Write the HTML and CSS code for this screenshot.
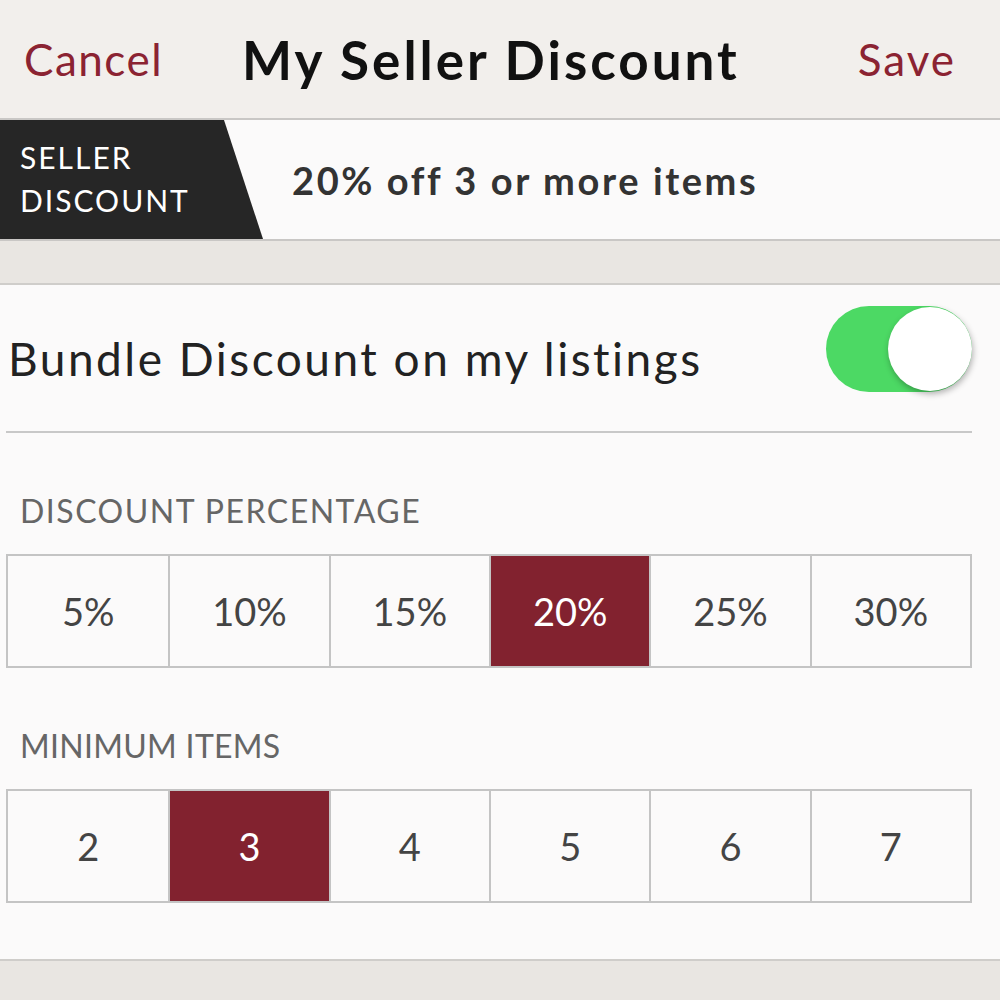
FILE: index.html
```html
<!DOCTYPE html>
<html>
<head>
  <title>My Seller Discount</title>
  <link rel="stylesheet" href="styles.css">
</head>
<body>

  <div class="navbar">
    <span class="nav-link">Cancel</span>
    <h1 class="nav-title">My Seller Discount</h1>
    <span class="nav-link save">Save</span>
  </div>

  <div class="banner">
    <div class="tag">SELLER<br>DISCOUNT</div>
    <div class="banner-text">20% off 3 or more items</div>
  </div>

  <div class="band"></div>

  <div class="card">
    <div class="toggle-row">
      <span class="toggle-label">Bundle Discount on my listings</span>
      <div class="switch on"><div class="knob"></div></div>
    </div>

    <div class="section-label">DISCOUNT PERCENTAGE</div>
    <div class="options">
      <div class="opt">5%</div>
      <div class="opt">10%</div>
      <div class="opt">15%</div>
      <div class="opt selected">20%</div>
      <div class="opt">25%</div>
      <div class="opt">30%</div>
    </div>

    <div class="section-label">MINIMUM ITEMS</div>
    <div class="options">
      <div class="opt">2</div>
      <div class="opt selected">3</div>
      <div class="opt">4</div>
      <div class="opt">5</div>
      <div class="opt">6</div>
      <div class="opt">7</div>
    </div>
  </div>

  <div class="band bottom"></div>

</body>
</html>
```

FILE: styles.css
```css
body {
  margin: 0;
  background: #e9e6e2;
  font-family: Lato, "Open Sans", sans-serif;
  color: #222;
}
.navbar {
  height: 118px;
  background: #f2efec;
  border-bottom: 2px solid #c9c7c5;
  display: flex;
  align-items: center;
  padding: 0 44px 0 24px;
}
.nav-link {
  color: #8b2332;
  font-size: 44px;
  letter-spacing: 1.5px;
}
.nav-link.save {
  margin-left: auto;
  letter-spacing: 2px;
}
.nav-title {
  margin: 0 0 0 79px;
  font-size: 53px;
  font-weight: 700;
  letter-spacing: 3px;
  color: #111;
}
.banner {
  height: 119px;
  background: #fbfafa;
  border-bottom: 2px solid #c9c7c5;
  display: flex;
  align-items: center;
}
.tag {
  height: 100%;
  width: 263px;
  box-sizing: border-box;
  background: #262626;
  color: #fff;
  font-size: 30px;
  letter-spacing: 2px;
  line-height: 43px;
  padding: 16px 0 0 20px;
  clip-path: polygon(0 0, 224px 0, 263px 100%, 0 100%);
}
.banner-text {
  margin-left: 29px;
  font-size: 38px;
  font-weight: 700;
  letter-spacing: 2.6px;
  color: #333;
}
.band {
  height: 42px;
  border-bottom: 2px solid #cfcdca;
}
.band.bottom {
  border-bottom: none;
  border-top: 2px solid #cfcdca;
}
.card {
  background: #fbfafa;
  padding: 0 28px 56px 6px;
}
.toggle-row {
  height: 146px;
  border-bottom: 2px solid #c8c8c8;
  display: flex;
  align-items: center;
  justify-content: space-between;
  padding-left: 2px;
}
.toggle-label {
  font-size: 46px;
  letter-spacing: 2.5px;
  color: #222;
}
.switch {
  width: 146px;
  height: 86px;
  border-radius: 43px;
  background: #4cd964;
  position: relative;
  margin-bottom: 18px;
}
.knob {
  position: absolute;
  right: 0;
  top: 1px;
  width: 84px;
  height: 84px;
  border-radius: 50%;
  background: #fff;
  box-shadow: 1px 3px 6px rgba(0, 0, 0, 0.3);
}
.section-label {
  font-size: 32px;
  letter-spacing: 1.5px;
  color: #666;
  padding: 58px 0 24px 14px;
}
.section-label + .options + .section-label {
  letter-spacing: 0.3px;
}
.options {
  display: grid;
  grid-template-columns: repeat(6, 1fr);
  border: 2px solid #c4c4c4;
  height: 110px;
}
.opt {
  display: flex;
  align-items: center;
  justify-content: center;
  font-size: 38px;
  color: #444;
  border-left: 2px solid #c4c4c4;
}
.opt:first-child {
  border-left: none;
}
.opt.selected {
  background: #82222f;
  color: #fff;
}
```
